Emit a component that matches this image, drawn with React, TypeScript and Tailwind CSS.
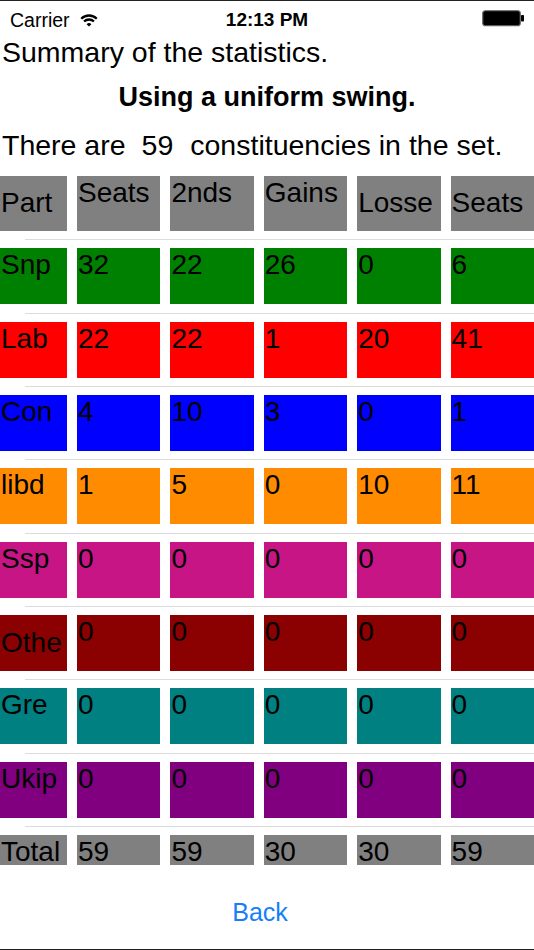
import React from "react";

type Align = "top" | "center";

interface Cell {
  text: string;
  align?: Align;
}

interface Row {
  color: string;
  cells: Cell[];
}

const rows: Row[] = [
  {
    color: "bg-[#008000]",
    cells: [{ text: "Snp" }, { text: "32" }, { text: "22" }, { text: "26" }, { text: "0" }, { text: "6" }],
  },
  {
    color: "bg-[#ff0000]",
    cells: [{ text: "Lab" }, { text: "22" }, { text: "22" }, { text: "1" }, { text: "20" }, { text: "41" }],
  },
  {
    color: "bg-[#0000ff]",
    cells: [{ text: "Con" }, { text: "4" }, { text: "10" }, { text: "3" }, { text: "0" }, { text: "1" }],
  },
  {
    color: "bg-[#ff8c00]",
    cells: [{ text: "libd" }, { text: "1" }, { text: "5" }, { text: "0" }, { text: "10" }, { text: "11" }],
  },
  {
    color: "bg-[#c71585]",
    cells: [{ text: "Ssp" }, { text: "0" }, { text: "0" }, { text: "0" }, { text: "0" }, { text: "0" }],
  },
  {
    color: "bg-[#8b0000]",
    cells: [{ text: "Othe", align: "center" }, { text: "0" }, { text: "0" }, { text: "0" }, { text: "0" }, { text: "0" }],
  },
  {
    color: "bg-[#008080]",
    cells: [{ text: "Gre" }, { text: "0" }, { text: "0" }, { text: "0" }, { text: "0" }, { text: "0" }],
  },
  {
    color: "bg-[#800080]",
    cells: [{ text: "Ukip" }, { text: "0" }, { text: "0" }, { text: "0" }, { text: "0" }, { text: "0" }],
  },
];

const header: Cell[] = [
  { text: "Part", align: "center" },
  { text: "Seats" },
  { text: "2nds" },
  { text: "Gains" },
  { text: "Losse", align: "center" },
  { text: "Seats", align: "center" },
];

const total: Cell[] = [
  { text: "Total" },
  { text: "59" },
  { text: "59" },
  { text: "30" },
  { text: "30" },
  { text: "59" },
];

function TableRow({ cells, color, height = "h-[56px]" }: { cells: Cell[]; color: string; height?: string }) {
  return (
    <div className={`flex gap-[10px] shrink-0 ${height}`}>
      {cells.map((c, i) => (
        <div
          key={i}
          className={`${color} ${i === 0 ? "w-[67px]" : "w-[83.4px]"} shrink-0 overflow-hidden whitespace-nowrap flex ${
            c.align === "center" ? "items-center" : "items-start pt-[1px]"
          } text-[28px] leading-[32px] pl-[1px]`}
        >
          {c.text}
        </div>
      ))}
    </div>
  );
}

function Separator() {
  return <div className="shrink-0 h-px bg-[#dcdcdf] ml-[25px] mt-[8.5px] mb-[7.83px]" />;
}

function Wifi() {
  return (
    <svg width="18" height="14" viewBox="0 0 18 14" className="ml-[10px]">
      <path d="M1.22 5.72 A11 11 0 0 1 16.78 5.72" fill="none" stroke="#000" strokeWidth="2.3" />
      <path d="M4.05 8.55 A7 7 0 0 1 13.95 8.55" fill="none" stroke="#000" strokeWidth="2.3" />
      <path d="M9 13.6 L6.6 11.2 A3.4 3.4 0 0 1 11.4 11.2 Z" fill="#000" />
    </svg>
  );
}

function Battery() {
  return (
    <svg width="43" height="17" viewBox="0 0 43 17">
      <rect x="0.75" y="0.75" width="37.5" height="15" rx="2.5" fill="#000" stroke="#666" strokeWidth="1.2" />
      <rect x="39" y="5" width="3" height="6.5" rx="0.8" fill="#000" />
    </svg>
  );
}

export default function App() {
  return (
    <div className="w-[534px] h-[950px] bg-white overflow-hidden flex flex-col text-black font-['Liberation_Sans',Arial,sans-serif]">
      <div className="h-px bg-[#222] shrink-0" />

      {/* status bar */}
      <div className="h-[35px] shrink-0 grid grid-cols-[1fr_auto_1fr] items-start pt-[8px]">
        <div className="flex items-center pl-[10px] text-[19.5px] leading-[22px]">
          Carrier
          <Wifi />
        </div>
        <div className="text-[19px] leading-[22px] font-bold">12:13 PM</div>
        <div className="flex justify-end pr-[9px] pt-[1px]">
          <Battery />
        </div>
      </div>

      <div className="text-[28.5px] leading-[32px] pl-[2px] shrink-0">Summary of the statistics.</div>
      <div className="text-[27px] leading-[32px] font-bold text-center mt-[12.7px] shrink-0">Using a uniform swing.</div>
      <div className="text-[28.5px] leading-[32px] pl-[2px] mt-[16.3px] shrink-0 flex">
        <span>There are</span>
        <span className="ml-[16px]">59</span>
        <span className="ml-[17px]">constituencies in the set.</span>
      </div>

      {/* table */}
      <div className="mt-[15px] h-[689px] shrink-0 overflow-hidden flex flex-col">
        <TableRow cells={header} color="bg-[#808080]" height="h-[55px]" />
        <div className="h-px" />
        {rows.map((r, i) => (
          <React.Fragment key={i}>
            <Separator />
            <TableRow cells={r.cells} color={r.color} />
          </React.Fragment>
        ))}
        <Separator />
        <TableRow cells={total} color="bg-[#808080]" />
      </div>

      <div className="mt-[32px] text-center text-[25px] leading-[30px] text-[#157efb] shrink-0 pr-[14px]">Back</div>
      <div className="flex-1" />
      <div className="h-px bg-[#222] shrink-0" />
    </div>
  );
}
